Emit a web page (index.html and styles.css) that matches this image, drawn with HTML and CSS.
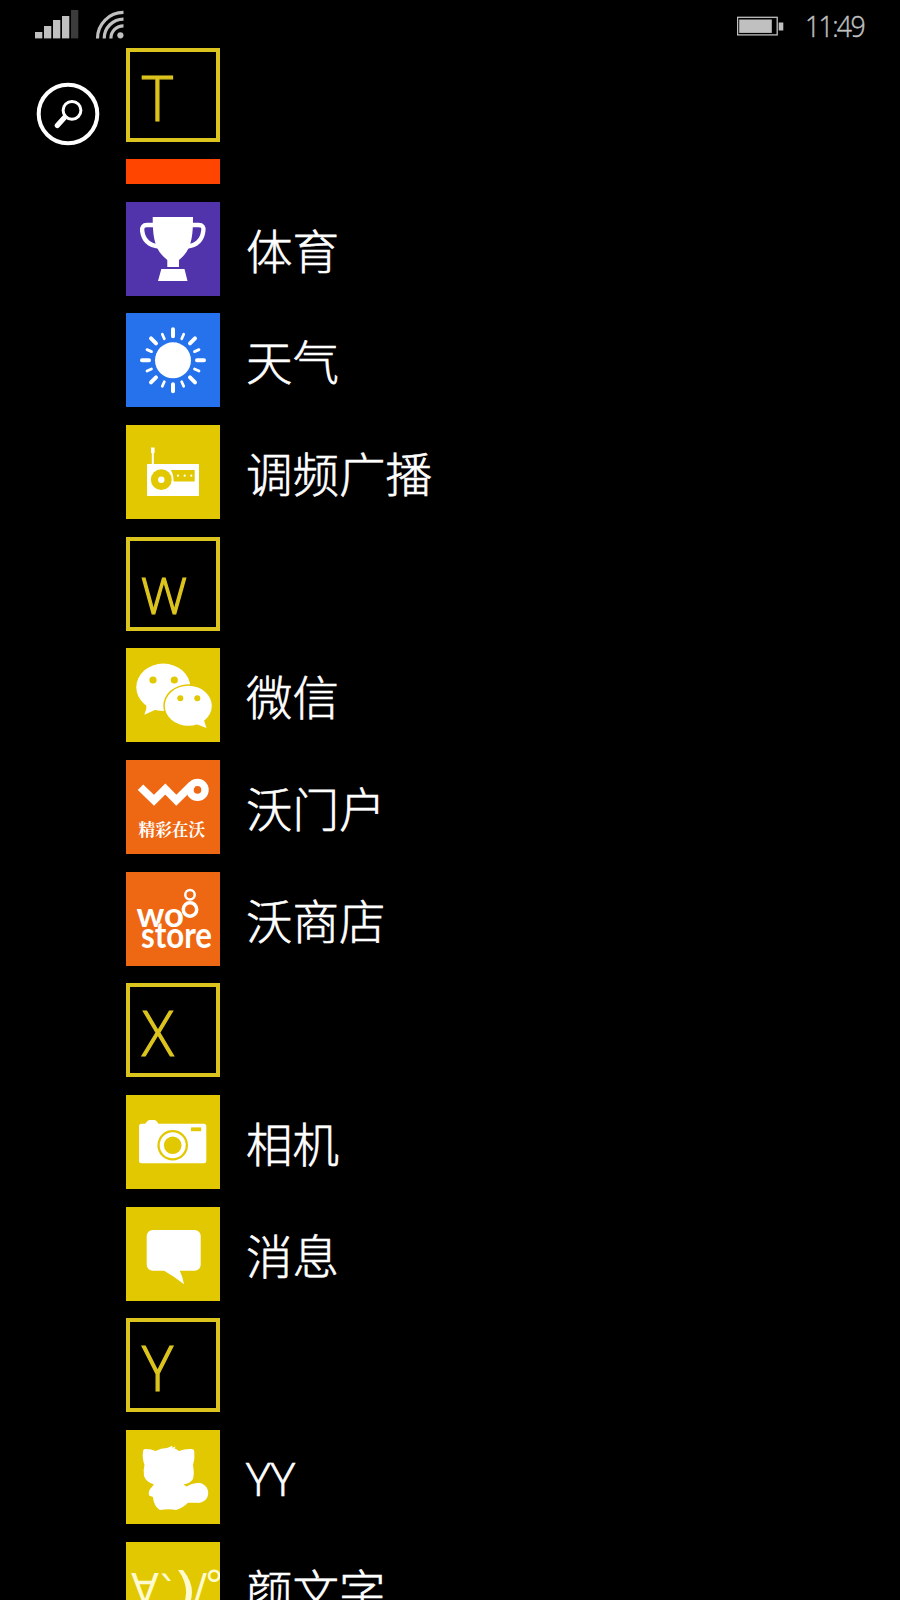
FILE: index.html
```html
<!doctype html>
<html lang="zh-CN">
<head>
    <meta charset="UTF-8">
    <title>应用列表</title>
    <link rel="stylesheet" href="styles.css">
</head>
<body>
<!--状态栏-->
<div class="status">
    <svg class="signal" width="90" height="30" viewBox="35 10 90 30">
        <rect x="35" y="32" width="7.3" height="6.4"/>
        <rect x="44" y="26" width="7.3" height="12.4"/>
        <rect x="53" y="20" width="7.3" height="18.4"/>
        <rect x="62" y="16" width="7.3" height="22.4"/>
        <rect class="off" x="71" y="10" width="7.3" height="28.4"/>
        <circle cx="120.4" cy="35.3" r="3.1"/>
        <g class="wave">
            <path d="M97.5 38.4A26 26 0 0 1 123.5 12.4"/>
            <path d="M104.2 38.4A19.3 19.3 0 0 1 123.5 19.1"/>
            <path d="M110.9 38.4A12.6 12.6 0 0 1 123.5 25.8"/>
        </g>
    </svg>
    <div class="right">
        <svg width="48" height="20" viewBox="737 15.5 48 20">
            <rect class="case" x="737.6" y="16.8" width="39.6" height="17.6"/>
            <rect x="739.2" y="19" width="32.6" height="13.4"/>
            <rect x="778.7" y="22" width="4.6" height="8"/>
        </svg>
        <span class="time">11:49</span>
    </div>
</div>

<div class="main">
    <!--搜索-->
    <div class="side">
        <svg class="search" width="64" height="64" viewBox="0 0 64 64">
            <circle cx="32" cy="32" r="29.3" stroke-width="4"/>
            <circle cx="36" cy="28.3" r="8.9" stroke-width="3"/>
            <path d="M28.5 35.5L21.3 43.6" stroke-width="5.2"/>
        </svg>
    </div>

    <div class="apps">
        <div class="letter"><span>T</span></div>
        <div class="cut"></div>
        <ul class="list">
            <li>
                <svg class="tile purple" viewBox="0 0 94 94">
                    <path d="M26.7 15H67C67 34 66 48 53 58V65H41.3V58C28 48 26.7 34 26.7 15Z"/>
                    <path d="M35.3 67H58.5L61.5 79H32Z"/>
                    <path class="line" stroke-width="4.4" d="M28 23H21Q15.5 23 16.2 29Q18 43 33 44.5M66 23H72.5Q78.5 23 77.3 29Q75.5 43 61 44.5"/>
                </svg>
                <p>体育</p>
            </li>
            <li>
                <svg class="tile blue" viewBox="0 0 94 94">
                    <circle cx="47" cy="47.3" r="18"/>
                    <g class="line" stroke-width="4" transform="translate(47 47.3)">
                        <path d="M0-24V-31M0 24V31M-24 0H-31M24 0H31M-17-17L-22-22M17-17L22-22M-17 17L-22 22M17 17L22 22"/>
                        <path stroke-width="2.8" d="M-8.7-21.5L-10.7-26M8.7-21.5L10.7-26M-8.7 21.5L-10.7 26M8.7 21.5L10.7 26M-21.5-8.7L-26-10.7M21.5-8.7L26-10.7M-21.5 8.7L-26 10.7M21.5 8.7L26 10.7"/>
                    </g>
                </svg>
                <p>天气</p>
            </li>
            <li>
                <svg class="tile" viewBox="0 0 94 94">
                    <path d="M21 39H73V71H21ZM25 22.5H28.6V28H27.8V40H25.8V28H25Z"/>
                    <path class="back" d="M44.7 45H68.7V56.5H47.6Q47.6 49 44.7 45Z"/>
                    <circle class="back" cx="35.3" cy="54.7" r="10.4"/>
                    <circle cx="35.3" cy="54.7" r="3.2"/>
                    <circle cx="52" cy="50.7" r="1.1"/>
                    <circle cx="58.7" cy="50.7" r="1.1"/>
                    <circle cx="65.3" cy="50.7" r="1.1"/>
                </svg>
                <p>调频广播</p>
            </li>
            <li><div class="letter small"><span>W</span></div></li>
            <li>
                <svg class="tile" viewBox="0 0 94 94">
                    <ellipse cx="37.3" cy="39.3" rx="27" ry="23.7"/>
                    <path d="M20.5 56Q21 61 18.3 66.7L30 61.5Z"/>
                    <circle class="back" cx="27" cy="32" r="3.6"/>
                    <circle class="back" cx="48.3" cy="32" r="3.6"/>
                    <ellipse class="back" cx="62.3" cy="57.8" rx="25" ry="21.5"/>
                    <ellipse cx="62.3" cy="57.8" rx="23.5" ry="20"/>
                    <path d="M70 76L80.5 80L77.5 71Z"/>
                    <circle class="back" cx="54.3" cy="50.3" r="3"/>
                    <circle class="back" cx="71.3" cy="50.3" r="3"/>
                </svg>
                <p>微信</p>
            </li>
            <li>
                <svg class="tile orange" viewBox="0 0 94 94">
                    <path class="line sharp" stroke-width="7.8" d="M14.5 27.2L28 40.3L39.3 29L50.3 40.3L66.2 24.4"/>
                    <circle class="line" cx="71.5" cy="29.9" r="7.5" stroke-width="7.4"/>
                    <text class="slogan" x="12.5" y="75.8">精彩在沃</text>
                </svg>
                <p>沃门户</p>
            </li>
            <li>
                <svg class="tile orange" viewBox="0 0 94 94">
                    <circle class="line" cx="64" cy="22.7" r="4.7" stroke-width="2.5"/>
                    <circle class="line" cx="64" cy="37.5" r="6.7" stroke-width="3.5"/>
                    <text class="logo" x="10.5" y="55" font-size="35" textLength="47.5" lengthAdjust="spacingAndGlyphs">wo</text>
                    <text class="logo edge" x="15" y="75.5" font-size="37" textLength="71" lengthAdjust="spacingAndGlyphs">store</text>
                </svg>
                <p>沃商店</p>
            </li>
            <li><div class="letter"><span>X</span></div></li>
            <li>
                <svg class="tile" viewBox="0 0 94 94">
                    <rect x="13" y="28.7" width="67.3" height="39.6" rx="2.5"/>
                    <path d="M19 29.5Q21 25 24 25H28Q31 25 32.5 29.5Z"/>
                    <circle class="back" cx="46.7" cy="50.3" r="15.3"/>
                    <circle cx="46.7" cy="50.3" r="13"/>
                    <circle class="back" cx="46.7" cy="50.3" r="8.8"/>
                    <rect class="back" x="65" y="32.4" width="10.2" height="3.8"/>
                </svg>
                <p>相机</p>
            </li>
            <li>
                <svg class="tile" viewBox="0 0 94 94">
                    <rect x="20.7" y="23" width="54" height="40.7" rx="6"/>
                    <path d="M37 63Q49 70 58 77.3Q57 70 53 62Z"/>
                </svg>
                <p>消息</p>
            </li>
            <li><div class="letter"><span>Y</span></div></li>
            <li>
                <svg class="tile" viewBox="0 0 94 94">
                    <path d="M17 21.5Q17 19 19 19Q25 18.7 29.5 21Q35 18 41 18L46.5 15.7L46 17.8L49.5 16.5L48.5 18.5Q51 19 53 21Q59 18.5 66 19Q68.3 19 68.3 21.5Q69 29 67 35Q68.5 44 67 49Q64 53.5 57.5 54.5L60.5 56.5Q66 52.7 71.5 52.9A10 10 0 1 1 71 72.8H62Q57 78 50 80Q43 78.5 34 80Q27.5 76 27 67L23 65.5Q22 61 25 58L28 54.5Q20 52 18 46Q17 40 18.5 35Q16 28 17 21.5Z"/>
                </svg>
                <p class="latin">YY</p>
            </li>
            <li>
                <svg class="tile" viewBox="0 0 94 94">
                    <g class="face">
                        <text x="5" y="61">∀</text>
                        <text x="32" y="64">ˋ</text>
                        <text x="31.5" y="55" transform="scale(1.5 1.2)">)</text>
                        <text x="67" y="61">/</text>
                        <text x="78" y="58">°</text>
                    </g>
                </svg>
                <p>颜文字</p>
            </li>
        </ul>
    </div>
</div>
</body>
</html>
```
FILE: styles.css
```css
* {
    margin: 0;
    padding: 0;
    box-sizing: border-box;
}

body {
    height: 1600px;
    overflow: hidden;
    background-color: #000;
    color: #fff;
    font-family: "Open Sans", "Noto Sans CJK SC", sans-serif;
    font-weight: 300;
}

svg {
    display: block;
    fill: #fff;
}

/*状态栏*/
.status {
    height: 48px;
    padding: 10px 35px 0;
    display: flex;
    justify-content: space-between;
    color: #c0c0c0;
}

.status svg {
    fill: #c0c0c0;
}

.status .off {
    fill: #3b3b3b;
}

.status .wave {
    fill: none;
    stroke: #c0c0c0;
    stroke-width: 3.2;
}

.status .case {
    fill: none;
    stroke: #c0c0c0;
    stroke-width: 1.3;
}

.right {
    display: flex;
    align-items: center;
    height: 31px;
    gap: 20px;
}

.time {
    width: 60px;
    font-size: 29px;
    line-height: 30px;
    letter-spacing: -1.8px;
    white-space: nowrap;
    transform: scaleX(.92);
    transform-origin: left;
    -webkit-text-stroke: .4px #c0c0c0;
}

/*列表*/
.main {
    display: flex;
}

.side {
    width: 126px;
    padding: 34px 0 0 36px;
}

.search {
    fill: none;
    stroke: #fff;
    stroke-linecap: round;
}

.letter {
    width: 94px;
    height: 94px;
    padding-left: 11.5px;
    border: 4px solid #dcc41e;
    color: #dcc41e;
    font-size: 62px;
    line-height: 91px;
    -webkit-text-stroke: 1.2px #dcc41e;
}

.letter span {
    display: block;
    transform: scaleX(.95);
    transform-origin: left;
}

.small {
    padding-left: 11px;
    font-size: 50px;
    line-height: 109px;
}

.small span {
    transform: scaleX(1.03);
}

.cut {
    width: 94px;
    height: 25px;
    margin: 17px 0 17.7px;
    background-color: #ff4500;
}

.list {
    list-style: none;
    display: flex;
    flex-direction: column;
    gap: 17.66px;
}

.list li {
    display: flex;
    height: 94px;
}

.tile {
    flex: none;
    width: 94px;
    height: 94px;
    background-color: #e2c800;
}

.purple {
    background-color: #5133ab;
}

.blue {
    background-color: #2672ec;
}

.orange {
    background-color: #ee6814;
}

.back {
    fill: #e2c800;
}

.line {
    fill: none;
    stroke: #fff;
    stroke-linecap: round;
}

.sharp {
    stroke-linecap: butt;
}

.list p {
    padding-left: 26px;
    font-size: 46.5px;
    line-height: 98px;
    white-space: nowrap;
    -webkit-text-stroke: .6px #fff;
}

.list .latin {
    line-height: 96px;
}

.slogan {
    font-family: "Noto Serif CJK SC", "Noto Sans CJK SC", serif;
    font-size: 16.7px;
    font-weight: 700;
}

.logo {
    font-family: Lato, sans-serif;
    font-weight: 700;
}

.edge {
    stroke: #ee6814;
    stroke-width: 1.2;
    paint-order: stroke;
}

.face {
    fill: #fffbd0;
    font-family: "DejaVu Sans", sans-serif;
    font-size: 41px;
    font-weight: 400;
}
```
